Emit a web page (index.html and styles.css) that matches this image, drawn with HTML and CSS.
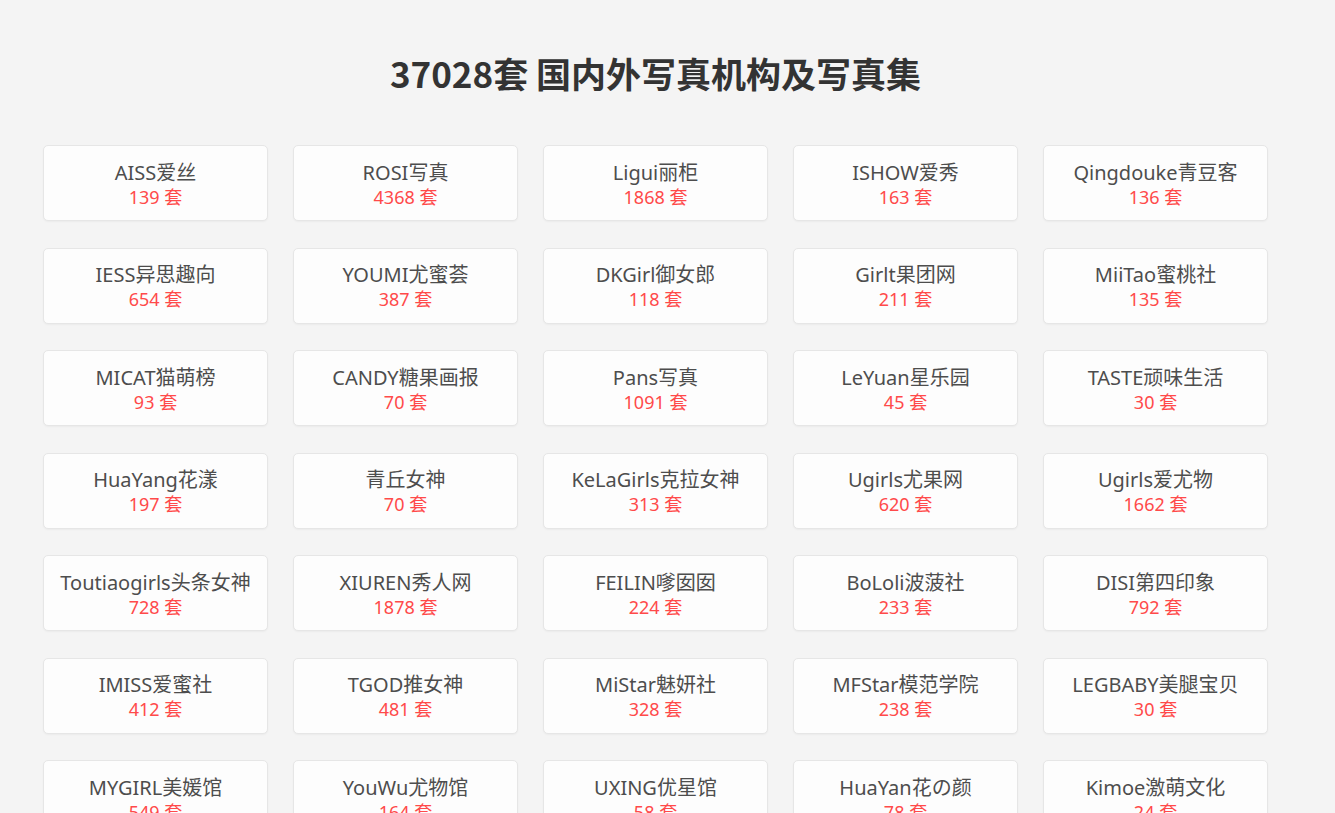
FILE: index.html
```html
<!DOCTYPE html>
<html lang="zh-CN">
<head>
<meta charset="utf-8">
<title>37028套 国内外写真机构及写真集</title>
<link rel="stylesheet" href="styles.css">
</head>
<body>
<div class="page">
  <h1 class="title">37028套 国内外写真机构及写真集</h1>
  <div class="grid">
    <a class="card"><span class="name">AISS爱丝</span><span class="count">139 套</span></a>
    <a class="card"><span class="name">ROSI写真</span><span class="count">4368 套</span></a>
    <a class="card"><span class="name">Ligui丽柜</span><span class="count">1868 套</span></a>
    <a class="card"><span class="name">ISHOW爱秀</span><span class="count">163 套</span></a>
    <a class="card"><span class="name">Qingdouke青豆客</span><span class="count">136 套</span></a>

    <a class="card"><span class="name">IESS异思趣向</span><span class="count">654 套</span></a>
    <a class="card"><span class="name">YOUMI尤蜜荟</span><span class="count">387 套</span></a>
    <a class="card"><span class="name">DKGirl御女郎</span><span class="count">118 套</span></a>
    <a class="card"><span class="name">Girlt果团网</span><span class="count">211 套</span></a>
    <a class="card"><span class="name">MiiTao蜜桃社</span><span class="count">135 套</span></a>

    <a class="card"><span class="name">MICAT猫萌榜</span><span class="count">93 套</span></a>
    <a class="card"><span class="name">CANDY糖果画报</span><span class="count">70 套</span></a>
    <a class="card"><span class="name">Pans写真</span><span class="count">1091 套</span></a>
    <a class="card"><span class="name">LeYuan星乐园</span><span class="count">45 套</span></a>
    <a class="card"><span class="name">TASTE顽味生活</span><span class="count">30 套</span></a>

    <a class="card"><span class="name">HuaYang花漾</span><span class="count">197 套</span></a>
    <a class="card"><span class="name">青丘女神</span><span class="count">70 套</span></a>
    <a class="card"><span class="name">KeLaGirls克拉女神</span><span class="count">313 套</span></a>
    <a class="card"><span class="name">Ugirls尤果网</span><span class="count">620 套</span></a>
    <a class="card"><span class="name">Ugirls爱尤物</span><span class="count">1662 套</span></a>

    <a class="card"><span class="name">Toutiaogirls头条女神</span><span class="count">728 套</span></a>
    <a class="card"><span class="name">XIUREN秀人网</span><span class="count">1878 套</span></a>
    <a class="card"><span class="name">FEILIN嗲囡囡</span><span class="count">224 套</span></a>
    <a class="card"><span class="name">BoLoli波菠社</span><span class="count">233 套</span></a>
    <a class="card"><span class="name">DISI第四印象</span><span class="count">792 套</span></a>

    <a class="card"><span class="name">IMISS爱蜜社</span><span class="count">412 套</span></a>
    <a class="card"><span class="name">TGOD推女神</span><span class="count">481 套</span></a>
    <a class="card"><span class="name">MiStar魅妍社</span><span class="count">328 套</span></a>
    <a class="card"><span class="name">MFStar模范学院</span><span class="count">238 套</span></a>
    <a class="card"><span class="name">LEGBABY美腿宝贝</span><span class="count">30 套</span></a>

    <a class="card"><span class="name">MYGIRL美媛馆</span><span class="count">549 套</span></a>
    <a class="card"><span class="name">YouWu尤物馆</span><span class="count">164 套</span></a>
    <a class="card"><span class="name">UXING优星馆</span><span class="count">58 套</span></a>
    <a class="card"><span class="name">HuaYan花の颜</span><span class="count">78 套</span></a>
    <a class="card"><span class="name">Kimoe激萌文化</span><span class="count">24 套</span></a>
  </div>
</div>
</body>
</html>
```

FILE: styles.css
```css
html, body {
  margin: 0;
  padding: 0;
  background: #f4f4f4;
}

body {
  font-family: "Noto Sans", "Noto Sans CJK SC", sans-serif;
  color: #4d4d4d;
}

.page {
  width: 1225px;
  margin-left: 43px;
  padding-top: 49px;
}

.title {
  margin: 0 0 48px;
  font-family: "Noto Sans CJK SC", sans-serif;
  font-size: 35px;
  line-height: 48px;
  font-weight: 700;
  color: #333;
  text-align: center;
}

.grid {
  display: grid;
  grid-template-columns: repeat(5, 225px);
  column-gap: 25px;
  row-gap: 26.5px;
}

.card {
  box-sizing: border-box;
  height: 76px;
  padding-top: 3px;
  display: flex;
  flex-direction: column;
  align-items: center;
  justify-content: center;
  background: #fdfdfd;
  border: 1px solid #e6e6e6;
  border-radius: 5px;
  box-shadow: 0 1px 2px rgba(0, 0, 0, 0.04);
  text-decoration: none;
  cursor: pointer;
}

.name {
  font-size: 20px;
  line-height: 24px;
  color: #4d4d4d;
  white-space: nowrap;
}

.count {
  font-size: 18px;
  line-height: 24px;
  color: #ff4a4a;
}
```
